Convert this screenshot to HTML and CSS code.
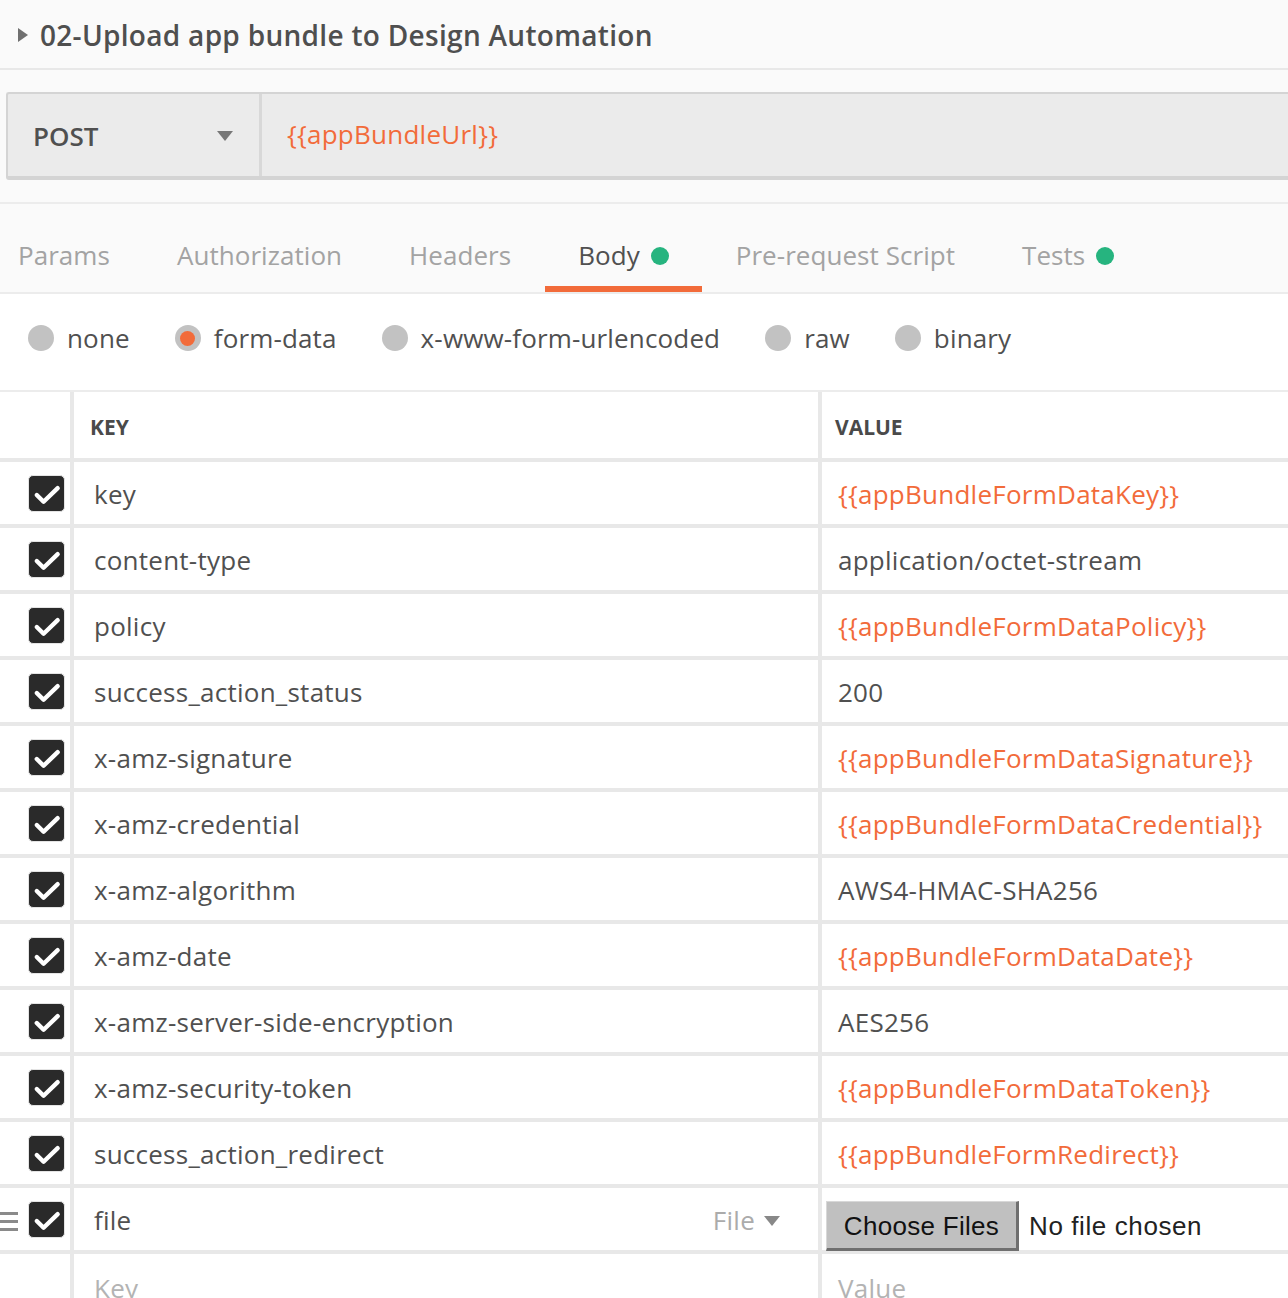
FILE: index.html
```html
<!DOCTYPE html>
<html>
<head>
<meta charset="utf-8">
<link rel="stylesheet" href="styles.css">
</head>
<body>
<div class="title-bar">
  <span class="caret-right"></span>
  <h1 class="title">02-Upload app bundle to Design Automation</h1>
</div>
<div class="request-area">
  <div class="request">
    <div class="method"><span class="method-name">POST</span><span class="caret-down"></span></div>
    <div class="url var">{{appBundleUrl}}</div>
  </div>
</div>
<div class="tabs">
  <div class="tab first">Params</div>
  <div class="tab">Authorization</div>
  <div class="tab">Headers</div>
  <div class="tab active">Body<span class="dot"></span></div>
  <div class="tab">Pre-request Script</div>
  <div class="tab">Tests<span class="dot"></span></div>
</div>
<div class="body-types">
  <div class="radio-item"><span class="radio"></span><span>none</span></div>
  <div class="radio-item"><span class="radio checked"></span><span>form-data</span></div>
  <div class="radio-item"><span class="radio"></span><span>x-www-form-urlencoded</span></div>
  <div class="radio-item"><span class="radio"></span><span>raw</span></div>
  <div class="radio-item"><span class="radio"></span><span>binary</span></div>
</div>
<div class="kv-table">
  <div class="row header">
    <div class="c-check"></div>
    <div class="c-key">KEY</div>
    <div class="c-val">VALUE</div>
  </div>
  <div class="row"><div class="c-check"><span class="cb"><svg viewBox="0 0 36 36"><path d="M8 19.5 L15 26.5 L29.5 12.5"/></svg></span></div><div class="c-key">key</div><div class="c-val var">{{appBundleFormDataKey}}</div></div>
  <div class="row"><div class="c-check"><span class="cb"><svg viewBox="0 0 36 36"><path d="M8 19.5 L15 26.5 L29.5 12.5"/></svg></span></div><div class="c-key">content-type</div><div class="c-val">application/octet-stream</div></div>
  <div class="row"><div class="c-check"><span class="cb"><svg viewBox="0 0 36 36"><path d="M8 19.5 L15 26.5 L29.5 12.5"/></svg></span></div><div class="c-key">policy</div><div class="c-val var">{{appBundleFormDataPolicy}}</div></div>
  <div class="row"><div class="c-check"><span class="cb"><svg viewBox="0 0 36 36"><path d="M8 19.5 L15 26.5 L29.5 12.5"/></svg></span></div><div class="c-key">success_action_status</div><div class="c-val">200</div></div>
  <div class="row"><div class="c-check"><span class="cb"><svg viewBox="0 0 36 36"><path d="M8 19.5 L15 26.5 L29.5 12.5"/></svg></span></div><div class="c-key">x-amz-signature</div><div class="c-val var">{{appBundleFormDataSignature}}</div></div>
  <div class="row"><div class="c-check"><span class="cb"><svg viewBox="0 0 36 36"><path d="M8 19.5 L15 26.5 L29.5 12.5"/></svg></span></div><div class="c-key">x-amz-credential</div><div class="c-val var">{{appBundleFormDataCredential}}</div></div>
  <div class="row"><div class="c-check"><span class="cb"><svg viewBox="0 0 36 36"><path d="M8 19.5 L15 26.5 L29.5 12.5"/></svg></span></div><div class="c-key">x-amz-algorithm</div><div class="c-val">AWS4-HMAC-SHA256</div></div>
  <div class="row"><div class="c-check"><span class="cb"><svg viewBox="0 0 36 36"><path d="M8 19.5 L15 26.5 L29.5 12.5"/></svg></span></div><div class="c-key">x-amz-date</div><div class="c-val var">{{appBundleFormDataDate}}</div></div>
  <div class="row"><div class="c-check"><span class="cb"><svg viewBox="0 0 36 36"><path d="M8 19.5 L15 26.5 L29.5 12.5"/></svg></span></div><div class="c-key">x-amz-server-side-encryption</div><div class="c-val">AES256</div></div>
  <div class="row"><div class="c-check"><span class="cb"><svg viewBox="0 0 36 36"><path d="M8 19.5 L15 26.5 L29.5 12.5"/></svg></span></div><div class="c-key">x-amz-security-token</div><div class="c-val var">{{appBundleFormDataToken}}</div></div>
  <div class="row"><div class="c-check"><span class="cb"><svg viewBox="0 0 36 36"><path d="M8 19.5 L15 26.5 L29.5 12.5"/></svg></span></div><div class="c-key">success_action_redirect</div><div class="c-val var">{{appBundleFormRedirect}}</div></div>
  <div class="row file-row">
    <div class="c-check"><span class="drag"><i></i><i></i><i></i></span><span class="cb"><svg viewBox="0 0 36 36"><path d="M8 19.5 L15 26.5 L29.5 12.5"/></svg></span></div>
    <div class="c-key"><span class="key-text">file</span><span class="type-select">File<span class="caret-small"></span></span></div>
    <div class="c-val file-val"><span class="file-btn">Choose Files</span><span class="file-none">No file chosen</span></div>
  </div>
  <div class="row placeholder">
    <div class="c-check"></div>
    <div class="c-key">Key</div>
    <div class="c-val">Value</div>
  </div>
</div>
</body>
</html>
```

FILE: styles.css
```css
* { box-sizing: border-box; }
html, body { margin: 0; padding: 0; }
body {
  background: #fafafa;
  font-family: "Open Sans", "Noto Sans", sans-serif;
  color: #505050;
  overflow: hidden;
  width: 1288px;
  height: 1298px;
  letter-spacing: 0.25px;
}

.title-bar {
  height: 70px;
  border-bottom: 2px solid #e8e8e8;
  display: flex;
  align-items: center;
  padding-left: 18px;
}
.caret-right {
  width: 0; height: 0;
  border-top: 7px solid transparent;
  border-bottom: 7px solid transparent;
  border-left: 10px solid #707070;
  margin-right: 12px;
  margin-top: 2px;
}
.title {
  margin: 0;
  font-size: 28px;
  font-weight: 600;
  color: #4f4f4f;
  line-height: 36px;
  letter-spacing: 0.3px;
  padding-top: 2px;
}

.request-area {
  padding: 22px 0 22px 6px;
  border-bottom: 2px solid #ececec;
}
.request {
  display: flex;
  height: 88px;
  border: 2px solid #d4d4d4;
  border-bottom-width: 4px;
  border-right: none;
  background: #ebebeb;
  border-radius: 3px 0 0 3px;
}
.method {
  width: 254px;
  border-right: 3px solid #d8d8d8;
  display: flex;
  align-items: center;
  justify-content: space-between;
  padding: 2px 26px 0 25px;
}
.method-name {
  font-size: 26px;
  font-weight: 600;
  color: #505050;
  letter-spacing: 0;
}
.caret-down {
  width: 0; height: 0;
  border-left: 8px solid transparent;
  border-right: 8px solid transparent;
  border-top: 10px solid #777;
}
.url {
  display: flex;
  align-items: center;
  padding-left: 25px;
  font-size: 26px;
  padding-bottom: 2px;
}
.var { color: #f26b3a; }

.tabs {
  display: flex;
  height: 90px;
  border-bottom: 2px solid #ececec;
  background: #fafafa;
}
.tab {
  height: 88px;
  padding: 33px 33.5px 0;
  font-size: 26px;
  line-height: 36px;
  color: #a3a3a3;
  display: flex;
  align-items: flex-start;
  border-bottom: 6px solid transparent;
  letter-spacing: 0.05px;
}
.tab.first { padding-left: 18px; }
.tab.active {
  color: #505050;
  border-bottom-color: #f26b3a;
}
.dot {
  width: 18px; height: 18px;
  border-radius: 50%;
  background: #26b47f;
  margin-left: 11px;
  margin-top: 10px;
}

.body-types {
  height: 98px;
  background: #fff;
  border-bottom: 2px solid #ececec;
  display: flex;
  align-items: center;
  padding-left: 28px;
  padding-bottom: 8px;
}
.radio-item {
  display: flex;
  align-items: center;
  margin-right: 45px;
  font-size: 26px;
  color: #505050;
  letter-spacing: 0.15px;
}
.radio {
  width: 26px; height: 26px;
  border-radius: 50%;
  background: #c2c2c2;
  margin-right: 13px;
  display: flex;
  align-items: center;
  justify-content: center;
}
.radio.checked::after {
  content: "";
  width: 15px; height: 15px;
  border-radius: 50%;
  background: #f26b3a;
}

.kv-table { background: #fff; }
.row {
  display: flex;
  height: 66px;
  border-bottom: 4px solid #e8e8e8;
  font-size: 26px;
  color: #505050;
}
.row.header { height: 70px; }
.c-check {
  width: 74px;
  border-right: 4px solid #e8e8e8;
  display: flex;
  align-items: center;
  padding-left: 28px;
  position: relative;
}
.c-key {
  width: 748px;
  border-right: 4px solid #e8e8e8;
  display: flex;
  align-items: center;
  padding-left: 20px;
  padding-top: 2px;
}
.c-val {
  flex: 1;
  display: flex;
  align-items: center;
  padding-left: 16px;
  padding-top: 2px;
  white-space: nowrap;
}
.header .c-key, .header .c-val {
  font-size: 21px;
  font-weight: 700;
  color: #4a4a4a;
  padding-top: 4px;
  letter-spacing: 0;
}
.header .c-key { padding-left: 16px; }
.header .c-val { padding-left: 13px; }

.cb {
  width: 37px; height: 37px;
  border-radius: 5px;
  background: #2a2a2a;
  border: 1px solid #e4e4e4;
  display: block;
}
.cb svg {
  display: block;
  width: 35px; height: 35px;
}
.cb path {
  fill: none;
  stroke: #fff;
  stroke-width: 4.5;
  stroke-linecap: round;
  stroke-linejoin: round;
}

.drag {
  position: absolute;
  left: 0;
  top: 24px;
  width: 18px;
  display: flex;
  flex-direction: column;
  gap: 5px;
}
.drag i {
  display: block;
  height: 3px;
  background: #8a8a8a;
}

.file-row .c-key { justify-content: space-between; padding-right: 38px; }
.type-select {
  color: #ababab;
  display: flex;
  align-items: center;
}
.caret-small {
  width: 0; height: 0;
  border-left: 8px solid transparent;
  border-right: 8px solid transparent;
  border-top: 10px solid #888;
  margin-left: 9px;
  margin-top: 2px;
}
.file-val {
  padding-left: 4px;
  align-items: flex-start;
  padding-top: 13px;
  font-family: "Liberation Sans", Arial, sans-serif;
  letter-spacing: 0.3px;
}
.file-btn {
  height: 50px;
  width: 193px;
  background: #c0c0c0;
  border-top: 1px solid #d8d8d8;
  border-left: 1px solid #d8d8d8;
  border-right: 3px solid #6f6f6f;
  border-bottom: 3px solid #6f6f6f;
  color: #111;
  font-size: 26px;
  display: flex;
  align-items: center;
  justify-content: center;
  padding-top: 2px;
}
.file-none {
  color: #222;
  font-size: 26px;
  margin-left: 10px;
  line-height: 50px;
  letter-spacing: 0.6px;
}

.placeholder { border-bottom: none; }
.placeholder .c-key, .placeholder .c-val { color: #b3b3b3; }
```
